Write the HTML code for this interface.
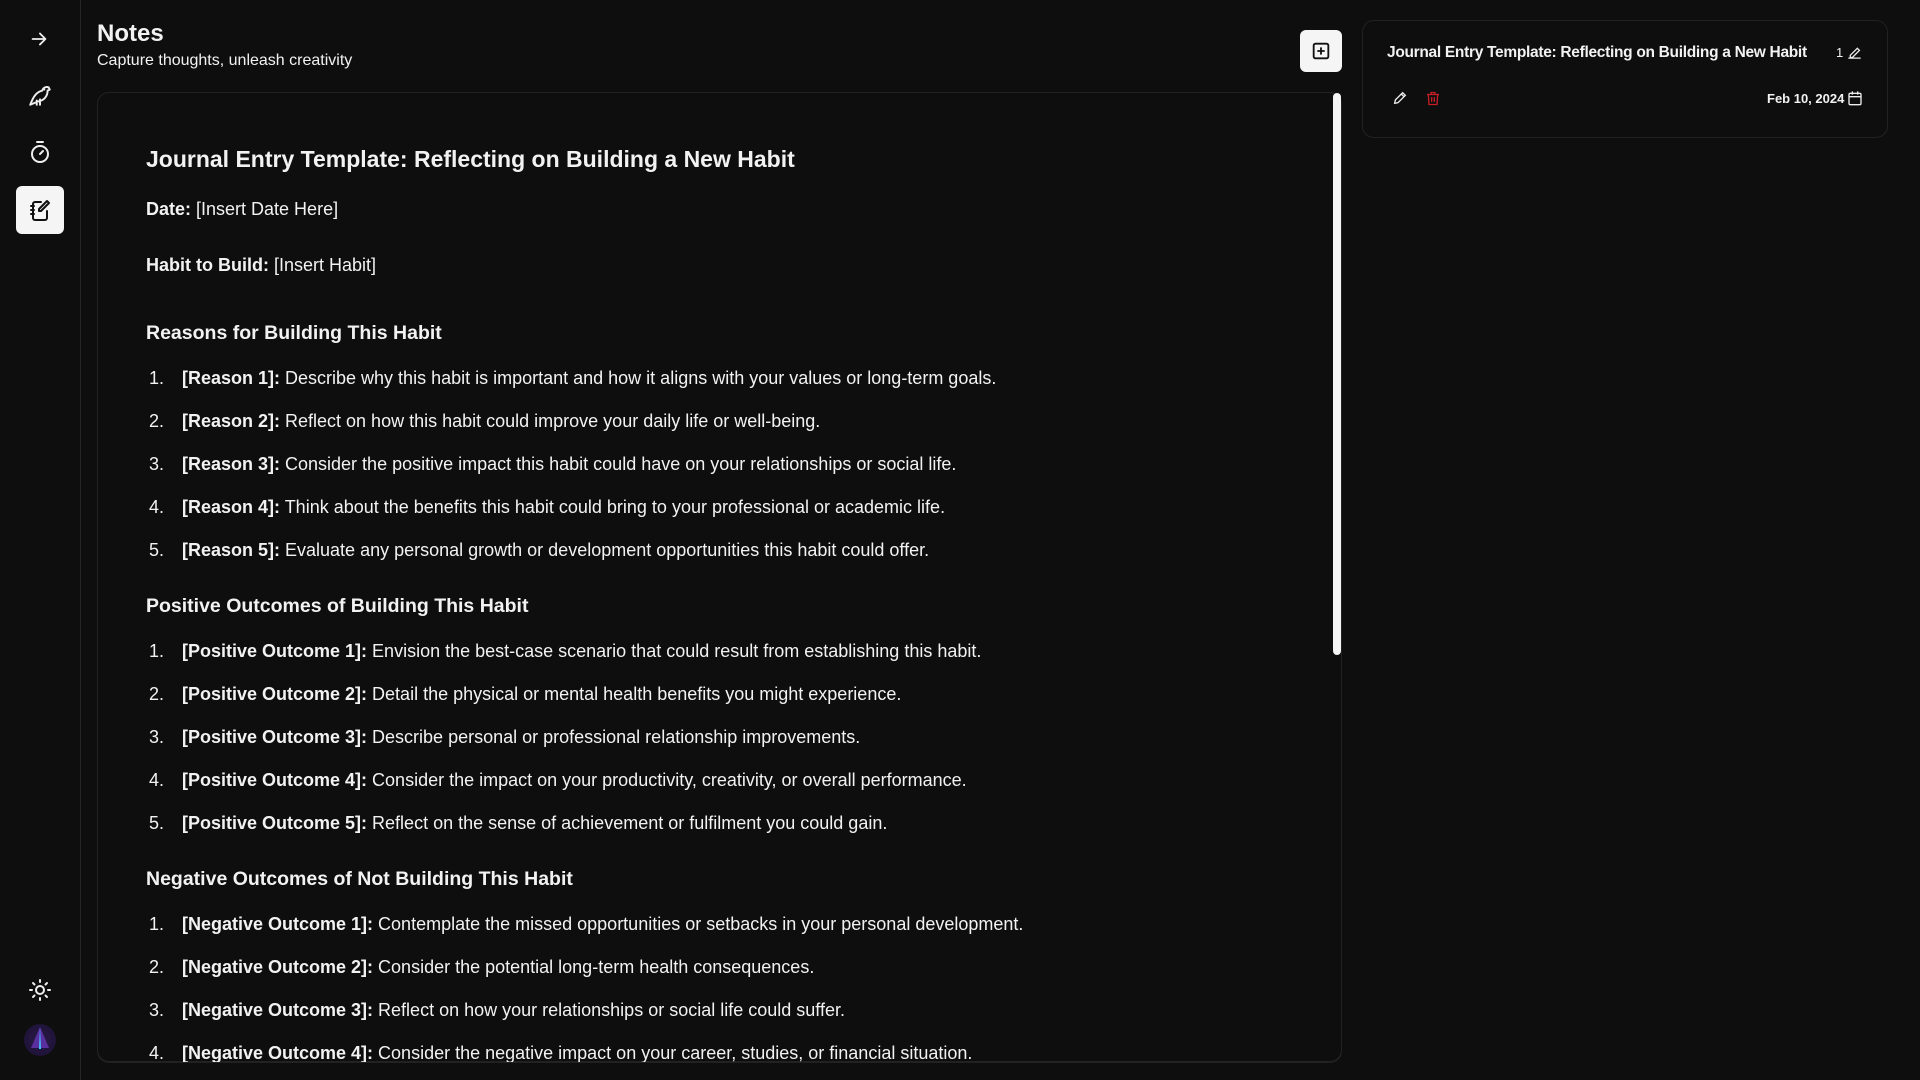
<!DOCTYPE html>
<html><head><meta charset="utf-8"><style>
*{margin:0;padding:0;box-sizing:border-box}
html,body{width:1920px;height:1080px;overflow:hidden}
body{background:#0e0e0e;color:#f2f2f2;font-family:"Liberation Sans",sans-serif;position:relative}
.a{position:absolute;white-space:nowrap}
.side{position:absolute;left:0;top:0;width:81px;height:1080px;border-right:1px solid #262626}
.card{position:absolute;left:97px;top:92px;width:1245px;height:970px;border:1px solid #222;border-radius:12px}
.p{font-size:18px;left:146px}
.n{font-size:18px;left:149px}
.t{font-size:18px;left:182px}
b{font-weight:700}
h2{font-size:20px}
</style></head><body>
<div class="side">
<svg class="a" style="left:28px;top:28px" width="22" height="22" viewBox="0 0 24 24" fill="none" stroke="#eee" stroke-width="2" stroke-linecap="round" stroke-linejoin="round"><path d="M5 12h14M13 6l6 6-6 6"/></svg>
<svg class="a" style="left:27px;top:82px" width="26" height="26" viewBox="0 0 24 24" fill="none" stroke="#eee" stroke-width="1.8" stroke-linecap="round" stroke-linejoin="round"><path d="M3 21c3-8 6-12 11-13 1-3 4-4 6-3l1 2-2 1c0 5-3 9-9 10l-7 3M9 17v4M12 16v5M16 7h.01"/></svg>
<svg class="a" style="left:28px;top:139px" width="24" height="26" viewBox="0 0 24 26" fill="none" stroke="#eee" stroke-width="2" stroke-linecap="round"><circle cx="12" cy="15" r="8"/><path d="M9 3h6M12 15l3-3"/></svg>
<div class="a" style="left:16px;top:186px;width:48px;height:48px;background:#f5f5f5;border-radius:6px"></div>
<svg class="a" style="left:28px;top:198px" width="24" height="24" viewBox="0 0 24 24" fill="none" stroke="#111" stroke-width="2" stroke-linecap="round" stroke-linejoin="round"><path d="M13 4H7a2 2 0 0 0-2 2v14a2 2 0 0 0 2 2h10a2 2 0 0 0 2-2v-7M3 8h3M3 12h3M3 16h3M19 3l2 2-8 8h-2v-2z"/></svg>
<svg class="a" style="left:28px;top:978px" width="24" height="24" viewBox="0 0 24 24" fill="none" stroke="#eee" stroke-width="2" stroke-linecap="round"><circle cx="12" cy="12" r="4"/><path d="M12 2v2M12 20v2M2 12h2M20 12h2M5 5l1.5 1.5M17.5 17.5L19 19M5 19l1.5-1.5M17.5 6.5L19 5"/></svg>
<div class="a" style="left:24px;top:1024px;width:32px;height:32px;border-radius:50%;background:radial-gradient(circle,#2a1a4a,#1a1030)"></div>
<svg class="a" style="left:27px;top:1024px" width="26" height="30" viewBox="0 0 26 30"><path d="M13 3L4 24h18z" fill="#5a2fa0"/><path d="M13 3l-1 22h2z" fill="#3cc8ff"/></svg>
</div>
<div class="a" style="left:97px;top:20px;font-size:24px;font-weight:700">Notes</div>
<div class="a" style="left:97px;top:52px;font-size:16px">Capture thoughts, unleash creativity</div>
<div class="a" style="left:1300px;top:30px;width:42px;height:42px;background:#f5f5f5;border-radius:6px"></div>
<svg class="a" style="left:1310px;top:40px" width="22" height="22" viewBox="0 0 24 24" fill="none" stroke="#111" stroke-width="2"><rect x="4" y="4" width="16" height="16" rx="2"/><path d="M12 8v8M8 12h8"/></svg>
<div class="card"></div>
<div class="a" style="left:1333px;top:93px;width:8px;height:562px;background:#f5f5f5;border-radius:4px"></div>
<div class="a" style="left:1362px;top:20px;width:526px;height:118px;border:1px solid #222;border-radius:12px"></div>
<div class="a" style="left:1387px;top:44px;font-size:15.5px;font-weight:700;letter-spacing:-.3px">Journal Entry Template: Reflecting on Building a New Habit</div>
<div class="a" style="left:1836px;top:45px;font-size:13px">1</div>
<svg class="a" style="left:1846px;top:44px" width="17" height="17" viewBox="0 0 24 24" fill="none" stroke="#eee" stroke-width="1.8" stroke-linecap="round"><path d="M4 20h16M6 16l10-10 3 3-10 10H6z"/></svg>
<svg class="a" style="left:1392px;top:90px" width="16" height="16" viewBox="0 0 24 24" fill="none" stroke="#eee" stroke-width="2" stroke-linecap="round"><path d="M4 20l1-5 11-11 4 4-11 11zM14 6l4 4"/></svg>
<svg class="a" style="left:1425px;top:90px" width="16" height="17" viewBox="0 0 24 24" fill="none" stroke="#c81e28" stroke-width="2"><path d="M3 6h18M9 6V3h6v3M5 6l1 15h12l1-15M10 10v7M14 10v7"/></svg>
<div class="a" style="left:1767px;top:91px;font-size:13px;font-weight:700">Feb 10, 2024</div>
<svg class="a" style="left:1847px;top:89px" width="16" height="18" viewBox="0 0 24 24" fill="none" stroke="#eee" stroke-width="2"><rect x="3" y="5" width="18" height="17" rx="2"/><path d="M3 10h18M8 2v5M16 2v5"/></svg>

<div class="a" style="left:146px;top:146px;font-size:23px;font-weight:700">Journal Entry Template: Reflecting on Building a New Habit</div>
<div class="a p" style="top:199px"><b>Date:</b> [Insert Date Here]</div>
<div class="a p" style="top:255px"><b>Habit to Build:</b> [Insert Habit]</div>
<h2 class="a" style="left:146px;top:322px;font-size:19.5px">Reasons for Building This Habit</h2>
<div class="a n" style="top:368px">1.</div><div class="a t" style="top:368px"><b>[Reason 1]:</b> Describe why this habit is important and how it aligns with your values or long-term goals.</div>
<div class="a n" style="top:411px">2.</div><div class="a t" style="top:411px"><b>[Reason 2]:</b> Reflect on how this habit could improve your daily life or well-being.</div>
<div class="a n" style="top:454px">3.</div><div class="a t" style="top:454px"><b>[Reason 3]:</b> Consider the positive impact this habit could have on your relationships or social life.</div>
<div class="a n" style="top:497px">4.</div><div class="a t" style="top:497px"><b>[Reason 4]:</b> Think about the benefits this habit could bring to your professional or academic life.</div>
<div class="a n" style="top:540px">5.</div><div class="a t" style="top:540px"><b>[Reason 5]:</b> Evaluate any personal growth or development opportunities this habit could offer.</div>
<h2 class="a" style="left:146px;top:595px;font-size:19.5px">Positive Outcomes of Building This Habit</h2>
<div class="a n" style="top:641px">1.</div><div class="a t" style="top:641px"><b>[Positive Outcome 1]:</b> Envision the best-case scenario that could result from establishing this habit.</div>
<div class="a n" style="top:684px">2.</div><div class="a t" style="top:684px"><b>[Positive Outcome 2]:</b> Detail the physical or mental health benefits you might experience.</div>
<div class="a n" style="top:727px">3.</div><div class="a t" style="top:727px"><b>[Positive Outcome 3]:</b> Describe personal or professional relationship improvements.</div>
<div class="a n" style="top:770px">4.</div><div class="a t" style="top:770px"><b>[Positive Outcome 4]:</b> Consider the impact on your productivity, creativity, or overall performance.</div>
<div class="a n" style="top:813px">5.</div><div class="a t" style="top:813px"><b>[Positive Outcome 5]:</b> Reflect on the sense of achievement or fulfilment you could gain.</div>
<h2 class="a" style="left:146px;top:868px;font-size:19.5px">Negative Outcomes of Not Building This Habit</h2>
<div class="a n" style="top:914px">1.</div><div class="a t" style="top:914px"><b>[Negative Outcome 1]:</b> Contemplate the missed opportunities or setbacks in your personal development.</div>
<div class="a n" style="top:957px">2.</div><div class="a t" style="top:957px"><b>[Negative Outcome 2]:</b> Consider the potential long-term health consequences.</div>
<div class="a n" style="top:1000px">3.</div><div class="a t" style="top:1000px"><b>[Negative Outcome 3]:</b> Reflect on how your relationships or social life could suffer.</div>
<div class="a n" style="top:1043px">4.</div><div class="a t" style="top:1043px"><b>[Negative Outcome 4]:</b> Consider the negative impact on your career, studies, or financial situation.</div>
<div class="a" style="left:96px;top:1063px;width:1250px;height:17px;background:#0e0e0e"></div>
<div class="a" style="left:97px;top:1050px;width:1245px;height:13px;border:1px solid #222;border-top:none;border-radius:0 0 12px 12px"></div>
</body></html>
